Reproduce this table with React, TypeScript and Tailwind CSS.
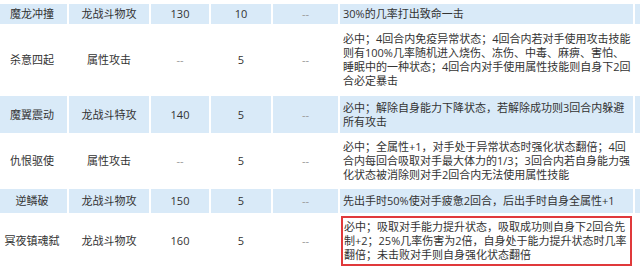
import type { ReactNode } from "react";

interface Skill {
  name: string;
  kind: string;
  power: string;
  pp: string;
  extra: string;
  effect: ReactNode;
  h: string;
  marked?: boolean;
}

const skills: Skill[] = [
  {
    name: "魔龙冲撞",
    kind: "龙战斗物攻",
    power: "130",
    pp: "10",
    extra: "--",
    effect: <>30%的几率打出致命一击</>,
    h: "h-[24px] pt-[4px]",
  },
  {
    name: "杀意四起",
    kind: "属性攻击",
    power: "--",
    pp: "5",
    extra: "--",
    effect: (
      <>
        必中；4回合内免疫异常状态；4回合内若对手使用攻击技能
        <br />
        则有100%几率随机进入烧伤、冻伤、中毒、麻痹、害怕、
        <br />
        睡眠中的一种状态；4回合内对手使用属性技能则自身下2回
        <br />
        合必定暴击
      </>
    ),
    h: "h-[68px]",
  },
  {
    name: "魔翼震动",
    kind: "龙战斗特攻",
    power: "140",
    pp: "5",
    extra: "--",
    effect: (
      <>
        必中；解除自身能力下降状态，若解除成功则3回合内躲避
        <br />
        所有攻击
      </>
    ),
    h: "h-[37px]",
  },
  {
    name: "仇恨驱使",
    kind: "属性攻击",
    power: "--",
    pp: "5",
    extra: "--",
    effect: (
      <>
        必中；全属性+1，对手处于异常状态时强化状态翻倍；4回
        <br />
        合内每回合吸取对手最大体力的1/3；3回合内若自身能力强
        <br />
        化状态被消除则对手2回合内无法使用属性技能
      </>
    ),
    h: "h-[52px]",
  },
  {
    name: "逆鳞破",
    kind: "龙战斗物攻",
    power: "150",
    pp: "5",
    extra: "--",
    effect: <>先出手时50%使对手疲惫2回合，后出手时自身全属性+1</>,
    h: "h-[24px]",
  },
  {
    name: "冥夜镇魂弑",
    kind: "龙战斗物攻",
    power: "160",
    pp: "5",
    extra: "--",
    effect: (
      <>
        必中；吸取对手能力提升状态，吸取成功则自身下2回合先
        <br />
        制+2；25%几率伤害为2倍，自身处于能力提升状态时几率
        <br />
        翻倍；未击败对手则自身强化状态翻倍
      </>
    ),
    h: "h-[52px]",
    marked: true,
  },
];

function Cell({ w, blue, children, className = "" }: { w: string; blue: boolean; children?: ReactNode; className?: string }) {
  return (
    <div className={`${w} shrink-0 flex items-center ${blue ? "bg-[#d9eaf8]" : "bg-white"} ${className}`}>
      {children}
    </div>
  );
}

export default function App() {
  return (
    <div
      className="w-[640px] h-[267px] overflow-hidden bg-white flex flex-col gap-[2px] text-[11px] leading-[14px] text-[#333]"
      style={{ fontFamily: '"Open Sans", "Noto Sans CJK SC", sans-serif' }}
    >
      {skills.map((s, i) => {
        const blue = i % 2 === 0;
        return (
          <div key={s.name} className={`flex gap-[2px] shrink-0 ${s.h}`}>
            <Cell w="w-[67px]" blue={blue} className="justify-center pr-[3px]">{s.name}</Cell>
            <Cell w="w-[80px]" blue={blue} className="justify-center">{s.kind}</Cell>
            <Cell w="w-[58px]" blue={blue} className={`justify-center ${s.power === "--" ? "text-[#999]" : ""}`}>{s.power}</Cell>
            <Cell w="w-[60px]" blue={blue} className="justify-center">{s.pp}</Cell>
            <Cell w="w-[65px]" blue={blue} className="justify-center text-[#999]">{s.extra}</Cell>
            <Cell w="w-[293px]" blue={blue} className={s.marked ? "p-[1px]" : "pl-[3px]"}>
              {s.marked ? (
                <div className="h-full w-full border-2 border-[#e0393b] pl-[1px] flex items-center whitespace-nowrap">
                  <div>{s.effect}</div>
                </div>
              ) : (
                <div className="whitespace-nowrap">{s.effect}</div>
              )}
            </Cell>
            <Cell w="w-[10px]" blue={blue} />
          </div>
        );
      })}
    </div>
  );
}
